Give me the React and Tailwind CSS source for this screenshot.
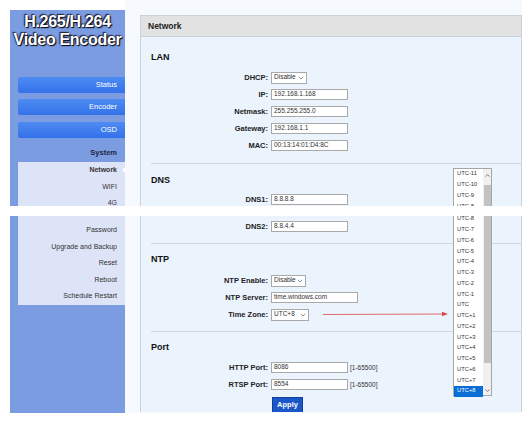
import React from "react";

const FONT = "font-['Liberation_Sans',Arial,sans-serif]";

function Chevron() {
  return (
    <svg width="6" height="4" viewBox="0 0 6 4" className="shrink-0">
      <path d="M0.8 0.8 L3 3 L5.2 0.8" fill="none" stroke="#777" strokeWidth="0.8" />
    </svg>
  );
}

function Select({ value, w }) {
  return (
    <div
      className={`flex items-center justify-between h-[12px] border border-[#a9a9a9] bg-white pl-[2px] pr-[2px] text-[6.5px] text-[#333] leading-none ${w}`}
    >
      <span>{value}</span>
      <Chevron />
    </div>
  );
}

function Input({ value, w = "w-[77px]" }) {
  return (
    <div className={`flex items-center h-[11px] border border-[#a9a9a9] bg-white pl-[2px] text-[6.5px] text-[#333] leading-none ${w}`}>
      {value}
    </div>
  );
}

function Row({ label, children, h = "h-[17px]", mt = "" }) {
  return (
    <div className={`flex items-center ${h} ${mt}`}>
      <div className="w-[127px] text-right font-bold text-[7.5px] text-[#222] leading-none">{label}</div>
      <div className="ml-[3px] flex items-center">{children}</div>
    </div>
  );
}

function Heading({ children, mt }) {
  return (
    <div className={`h-[14px] flex items-center pl-[10px] font-bold text-[9px] text-[#111] leading-none ${mt}`}>
      {children}
    </div>
  );
}

function Divider({ mt }) {
  return <div className={`ml-[10px] h-px bg-[#cdd7e3] ${mt}`} />;
}

function NavButton({ label, mt }) {
  return (
    <div
      className={`ml-[8px] h-[16px] flex items-center justify-end pr-[8px] rounded-l-[2px] text-[7.5px] text-white bg-gradient-to-b from-[#4d8bf3] to-[#3571e8] ${mt}`}
    >
      {label}
    </div>
  );
}

function SubItem({ label, bold, active }) {
  return (
    <div className={`relative h-[16.5px] flex items-center justify-end pr-[8px] text-[7px] text-[#333] ${bold ? "font-bold text-[#111]" : ""}`}>
      {label}
      {active && (
        <div className="absolute right-0 top-1/2 -translate-y-1/2 w-0 h-0 border-y-[3px] border-y-transparent border-r-[3px] border-r-white" />
      )}
    </div>
  );
}

const ZONES = [
  "UTC-11", "UTC-10", "UTC-9", "UTC-8", "UTC-7", "UTC-6", "UTC-5", "UTC-4", "UTC-3", "UTC-2", "UTC-1",
  "UTC", "UTC+1", "UTC+2", "UTC+3", "UTC+4", "UTC+5", "UTC+6", "UTC+7", "UTC+8",
];

function ZoneItem({ z }) {
  const sel = z === "UTC+8";
  return (
    <div
      className={`h-[10.75px] flex items-center pl-[3px] text-[5.8px] leading-none ${sel ? "bg-[#0a6ed6] text-white" : "text-[#333]"}`}
    >
      {z}
    </div>
  );
}

export default function App() {
  return (
    <div className={`w-[532px] h-[425px] bg-white overflow-hidden ${FONT}`}>
      {/* TOP CAPTURE */}
      <section className="relative h-[206px] flex overflow-hidden">
        <div className="w-[10px] shrink-0" />
        <div className="w-[115px] shrink-0 mt-[10px] bg-[#7b9ce0] overflow-hidden">
          <div className="pt-[3px] text-center text-white font-bold text-[16px] leading-[18px] tracking-[-0.3px] [text-shadow:0_0_2px_#1a1a3a,1px_1px_1px_#000,-1px_-1px_1px_#223]">
            <div>H.265/H.264</div>
            <div>Video Encoder</div>
          </div>
          <NavButton label="Status" mt="mt-[28px]" />
          <NavButton label="Encoder" mt="mt-[6px]" />
          <NavButton label="OSD" mt="mt-[7px]" />
          <div className="mt-[10px] h-[10px] flex items-center justify-end pr-[8px] font-bold text-[7.5px] text-[#1c2444]">
            System
          </div>
          <div className="mt-[4px] ml-[8px] h-[60px] bg-[#dde4f8]">
            <SubItem label="Network" bold active />
            <SubItem label="WIFI" />
            <SubItem label="4G" />
          </div>
        </div>
        <div className="w-[397px] shrink-0 bg-[#f6f9fd] pl-[15px] pt-[15px]">
          <div className="w-[382px] h-full border border-b-0 border-[#c9d1da] bg-[#ebf3fd]">
            <div className="h-[21px] bg-[#e2e2e2] border-b border-[#c6d2e2] flex items-center pl-[7px] font-bold text-[8.5px] text-[#222]">
              Network
            </div>
            <Heading mt="mt-[13px]">LAN</Heading>
            <Row label="DHCP:" mt="mt-[5px]">
              <Select value="Disable" w="w-[36px]" />
            </Row>
            <Row label="IP:">
              <Input value="192.168.1.168" />
            </Row>
            <Row label="Netmask:">
              <Input value="255.255.255.0" />
            </Row>
            <Row label="Gateway:">
              <Input value="192.168.1.1" />
            </Row>
            <Row label="MAC:">
              <Input value="00:13:14:01:D4:8C" />
            </Row>
            <Divider mt="mt-[9px]" />
            <Heading mt="mt-[9px]">DNS</Heading>
            <Row label="DNS1:" mt="mt-[4px]">
              <Input value="8.8.8.8" />
            </Row>
          </div>
        </div>
        <div className="w-[10px] shrink-0" />
        {/* dropdown list (top part) */}
        <div className="absolute left-[453px] top-[168px] w-[39px] h-[60px] border border-[#a6a6a6] bg-white flex">
          <div className="w-[29px]">
            {ZONES.slice(0, 4).map((z) => (
              <ZoneItem key={z} z={z} />
            ))}
          </div>
          <div className="w-[8px] bg-[#f0f0f0] flex flex-col items-center">
            <div className="h-[12px] flex items-center justify-center">
              <svg width="5" height="3" viewBox="0 0 5 3">
                <path d="M0.5 2.6 L2.5 0.6 L4.5 2.6" fill="none" stroke="#606060" strokeWidth="0.8" />
              </svg>
            </div>
            <div className="mt-[4px] w-[7px] flex-1 bg-[#c2c2c2]" />
          </div>
        </div>
      </section>

      <div className="h-[10px]" />

      {/* BOTTOM CAPTURE */}
      <section className="relative h-[197px] flex overflow-hidden">
        <div className="w-[10px] shrink-0" />
        <div className="w-[115px] shrink-0 bg-[#7b9ce0]">
          <div className="ml-[8px] pt-[6px] bg-[#dde4f8]">
            <SubItem label="Password" />
            <SubItem label="Upgrade and Backup" />
            <SubItem label="Reset" />
            <SubItem label="Reboot" />
            <SubItem label="Schedule Restart" />
          </div>
        </div>
        <div className="w-[397px] shrink-0 bg-[#f6f9fd] pl-[15px]">
          <div className="w-[382px] h-[196px] border-x border-[#c9d1da] bg-[#ebf3fd] overflow-hidden">
            <Row label="DNS2:" mt="mt-[2px]">
              <Input value="8.8.4.4" />
            </Row>
            <Divider mt="mt-[8px]" />
            <Heading mt="mt-[8px]">NTP</Heading>
            <Row label="NTP Enable:" mt="mt-[6px]">
              <Select value="Disable" w="w-[35px]" />
            </Row>
            <Row label="NTP Server:">
              <Input value="time.windows.com" w="w-[87px]" />
            </Row>
            <Row label="Time Zone:">
              <Select value="UTC+8" w="w-[38px]" />
            </Row>
            <Divider mt="mt-[8px]" />
            <Heading mt="mt-[8px]">Port</Heading>
            <Row label="HTTP Port:" mt="mt-[5px]">
              <Input value="8086" />
              <span className="ml-[2px] text-[6.5px] text-[#333]">[1-65500]</span>
            </Row>
            <Row label="RTSP Port:">
              <Input value="8554" />
              <span className="ml-[2px] text-[6.5px] text-[#333]">[1-65500]</span>
            </Row>
            <div className="mt-[4px] ml-[131px] w-[31px] h-[16px] bg-[#1b57c9] border border-[#0f3e9c] flex items-center justify-center text-white font-bold text-[7.5px]">
              Apply
            </div>
          </div>
        </div>
        <div className="w-[10px] shrink-0" />
        {/* red arrow */}
        <svg className="absolute left-[322px] top-[94px]" width="128" height="8" viewBox="0 0 128 8">
          <line x1="1" y1="4.5" x2="123" y2="4" stroke="#e06a6a" strokeWidth="1" />
          <path d="M120 1.8 L126 4 L120 6.2 Z" fill="#d94848" />
        </svg>
        {/* dropdown list (bottom part) */}
        <div className="absolute left-[453px] top-[-10px] w-[39px] h-[190px] border border-[#a6a6a6] bg-white flex">
          <div className="w-[30px] pt-[6.8px]">
            {ZONES.slice(3).map((z) => (
              <ZoneItem key={z} z={z} />
            ))}
          </div>
          <div className="w-[8px] bg-[#f0f0f0] flex flex-col items-center">
            <div className="w-[7px] h-[156px] bg-[#c2c2c2]" />
            <div className="flex-1" />
            <div className="h-[10px] flex items-center justify-center">
              <svg width="5" height="3" viewBox="0 0 5 3">
                <path d="M0.5 0.5 L2.5 2.5 L4.5 0.5" fill="none" stroke="#606060" strokeWidth="0.8" />
              </svg>
            </div>
          </div>
        </div>
      </section>
    </div>
  );
}
